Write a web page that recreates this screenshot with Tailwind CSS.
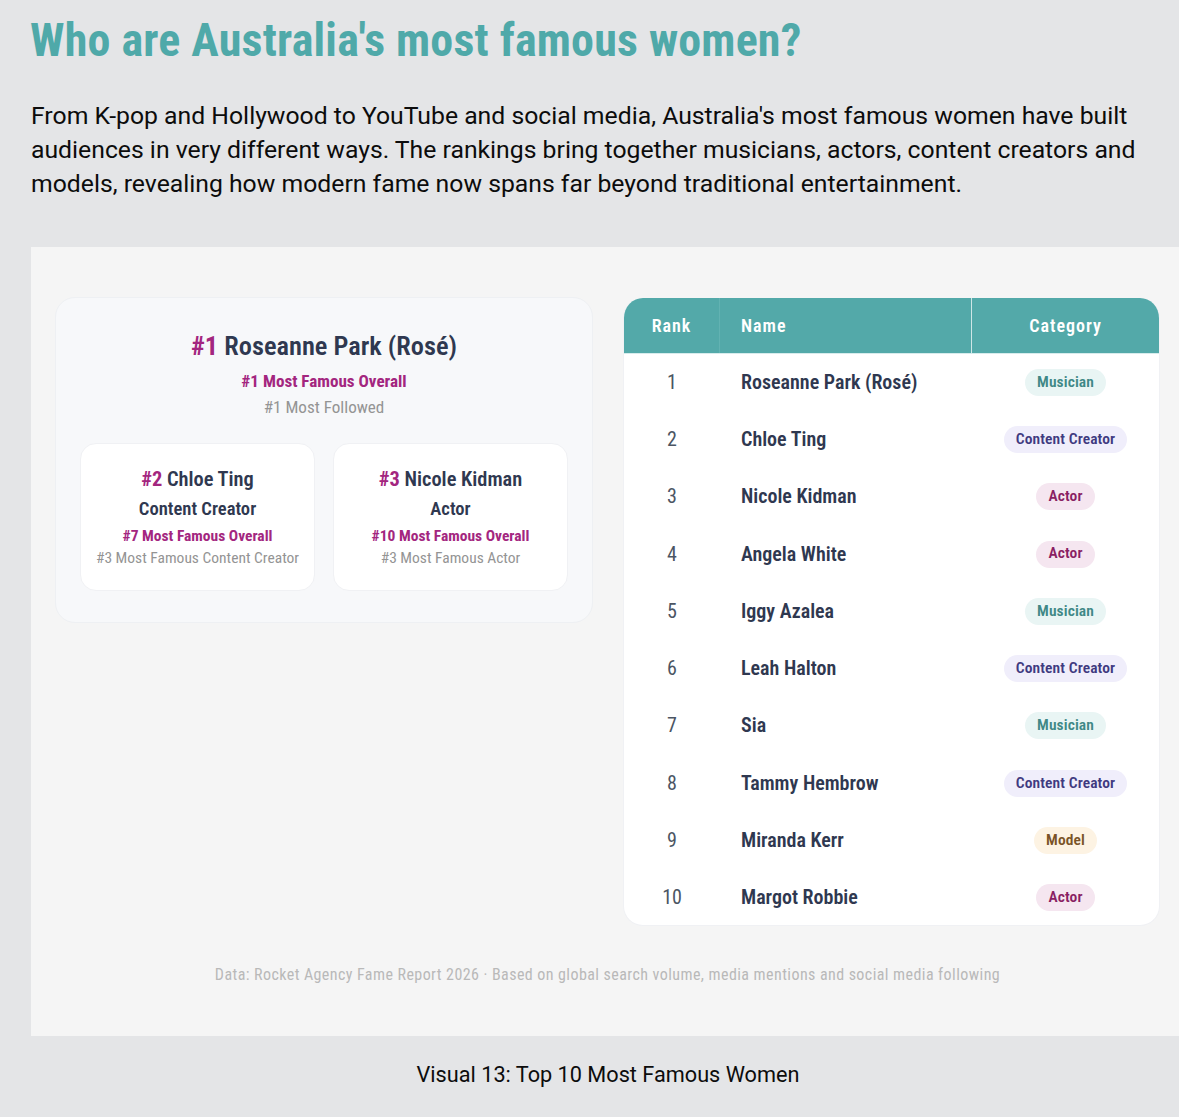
<!DOCTYPE html>
<html lang="en">
<head>
  <meta charset="UTF-8" />
  <title>Top 10 Most Famous Women</title>
  <script src="https://cdn.jsdelivr.net/npm/@tailwindcss/browser@4"></script>
</head>
<body class="bg-[#e4e5e7] font-[Roboto,sans-serif] h-[1117px] overflow-hidden">
  <div class="pl-[31px]">
    <h1 class="font-['Roboto_Condensed',Roboto,sans-serif] font-bold stretch-condensed text-[46px] leading-[54px] pt-[13px] -ml-[1px] text-[#4fa9a9] tracking-[0.2px]">Who are Australia's most famous women?</h1>
    <p class="mt-[32px] text-[24.75px] leading-[34px] text-[#0c0c0c] w-[1130px]">From K-pop and Hollywood to YouTube and social media, Australia's most famous women have built audiences in very different ways. The rankings bring together musicians, actors, content creators and models, revealing how modern fame now spans far beyond traditional entertainment.</p>

    <div class="mt-[46px] bg-[#f5f5f5] h-[789px] pt-[50px] pl-[24px] pr-[19px] font-['Roboto_Condensed',Roboto,sans-serif] stretch-condensed">
      <div class="flex items-start gap-[30px]">
        <!-- podium -->
        <div class="w-[538px] h-[326px] bg-[#f7f8fa] border border-[#eef0f3] rounded-[20px] px-[24px] pt-[29px] text-center">
          <div class="text-[26.4px] leading-[38px] font-semibold text-[#2f3850]"><span class="text-[#a3267f] font-bold">#1</span> Roseanne Park (Rosé)</div>
          <div class="mt-[5px] text-[17.1px] leading-[22px] font-bold text-[#a3267f]">#1 Most Famous Overall</div>
          <div class="mt-[4px] text-[17.1px] leading-[22px] text-[#949494]">#1 Most Followed</div>
          <div class="mt-[25px] flex gap-[18px]">
            <div class="w-[235px] h-[148px] bg-white border border-[#f0f1f4] rounded-[16px] pt-[21px]">
              <div class="text-[20.4px] leading-[28px] font-semibold text-[#2f3850]"><span class="text-[#a3267f] font-bold">#2</span> Chloe Ting</div>
              <div class="mt-[3px] text-[18.6px] leading-[26px] font-semibold text-[#2f3850]">Content Creator</div>
              <div class="mt-[4px] text-[15.5px] leading-[20px] font-bold text-[#a3267f]">#7 Most Famous Overall</div>
              <div class="mt-[2px] text-[15.5px] leading-[20px] text-[#949494]">#3 Most Famous Content Creator</div>
            </div>
            <div class="w-[235px] h-[148px] bg-white border border-[#f0f1f4] rounded-[16px] pt-[21px]">
              <div class="text-[20.4px] leading-[28px] font-semibold text-[#2f3850]"><span class="text-[#a3267f] font-bold">#3</span> Nicole Kidman</div>
              <div class="mt-[3px] text-[18.6px] leading-[26px] font-semibold text-[#2f3850]">Actor</div>
              <div class="mt-[4px] text-[15.5px] leading-[20px] font-bold text-[#a3267f]">#10 Most Famous Overall</div>
              <div class="mt-[2px] text-[15.5px] leading-[20px] text-[#949494]">#3 Most Famous Actor</div>
            </div>
          </div>
        </div>

        <!-- table -->
        <div class="mt-[1px] w-[538px] h-[628px] bg-white rounded-[20px] overflow-hidden border border-[#f0f1f4] border-t-0">
          <div class="flex h-[56px] bg-[#53a9a9] text-white font-semibold text-[18px] tracking-[1px] items-center border-b border-[#d7ecec]">
            <div class="w-[96px] h-full flex items-center justify-center border-r border-[#62b2b2]">Rank</div>
            <div class="w-[252px] h-full flex items-center pl-[21px] border-r border-[#cfe6e6]">Name</div>
            <div class="flex-1 text-center">Category</div>
          </div>
          <div class="-mt-[1px]">
            <div class="flex h-[57.3px] items-center"><div class="w-[96px] text-center text-[20px] text-[#4b5563]">1</div><div class="w-[252px] pl-[21px] text-[20px] font-semibold text-[#2f3850]">Roseanne Park (Rosé)</div><div class="flex-1 flex justify-center"><span class="mt-[1px] rounded-full px-[12px] h-[27px] flex items-center text-[15.5px] tracking-[0.1px] font-semibold bg-[#e9f5f4] text-[#3f8886]">Musician</span></div></div>
            <div class="flex h-[57.3px] items-center"><div class="w-[96px] text-center text-[20px] text-[#4b5563]">2</div><div class="w-[252px] pl-[21px] text-[20px] font-semibold text-[#2f3850]">Chloe Ting</div><div class="flex-1 flex justify-center"><span class="mt-[1px] rounded-full px-[12px] h-[27px] flex items-center text-[15.5px] tracking-[0.1px] font-semibold bg-[#f0eefb] text-[#3f3a80]">Content Creator</span></div></div>
            <div class="flex h-[57.3px] items-center"><div class="w-[96px] text-center text-[20px] text-[#4b5563]">3</div><div class="w-[252px] pl-[21px] text-[20px] font-semibold text-[#2f3850]">Nicole Kidman</div><div class="flex-1 flex justify-center"><span class="mt-[1px] rounded-full px-[12px] h-[27px] flex items-center text-[15.5px] tracking-[0.1px] font-semibold bg-[#f5e6f0] text-[#8a1f63]">Actor</span></div></div>
            <div class="flex h-[57.3px] items-center"><div class="w-[96px] text-center text-[20px] text-[#4b5563]">4</div><div class="w-[252px] pl-[21px] text-[20px] font-semibold text-[#2f3850]">Angela White</div><div class="flex-1 flex justify-center"><span class="mt-[1px] rounded-full px-[12px] h-[27px] flex items-center text-[15.5px] tracking-[0.1px] font-semibold bg-[#f5e6f0] text-[#8a1f63]">Actor</span></div></div>
            <div class="flex h-[57.3px] items-center"><div class="w-[96px] text-center text-[20px] text-[#4b5563]">5</div><div class="w-[252px] pl-[21px] text-[20px] font-semibold text-[#2f3850]">Iggy Azalea</div><div class="flex-1 flex justify-center"><span class="mt-[1px] rounded-full px-[12px] h-[27px] flex items-center text-[15.5px] tracking-[0.1px] font-semibold bg-[#e9f5f4] text-[#3f8886]">Musician</span></div></div>
            <div class="flex h-[57.3px] items-center"><div class="w-[96px] text-center text-[20px] text-[#4b5563]">6</div><div class="w-[252px] pl-[21px] text-[20px] font-semibold text-[#2f3850]">Leah Halton</div><div class="flex-1 flex justify-center"><span class="mt-[1px] rounded-full px-[12px] h-[27px] flex items-center text-[15.5px] tracking-[0.1px] font-semibold bg-[#f0eefb] text-[#3f3a80]">Content Creator</span></div></div>
            <div class="flex h-[57.3px] items-center"><div class="w-[96px] text-center text-[20px] text-[#4b5563]">7</div><div class="w-[252px] pl-[21px] text-[20px] font-semibold text-[#2f3850]">Sia</div><div class="flex-1 flex justify-center"><span class="mt-[1px] rounded-full px-[12px] h-[27px] flex items-center text-[15.5px] tracking-[0.1px] font-semibold bg-[#e9f5f4] text-[#3f8886]">Musician</span></div></div>
            <div class="flex h-[57.3px] items-center"><div class="w-[96px] text-center text-[20px] text-[#4b5563]">8</div><div class="w-[252px] pl-[21px] text-[20px] font-semibold text-[#2f3850]">Tammy Hembrow</div><div class="flex-1 flex justify-center"><span class="mt-[1px] rounded-full px-[12px] h-[27px] flex items-center text-[15.5px] tracking-[0.1px] font-semibold bg-[#f0eefb] text-[#3f3a80]">Content Creator</span></div></div>
            <div class="flex h-[57.3px] items-center"><div class="w-[96px] text-center text-[20px] text-[#4b5563]">9</div><div class="w-[252px] pl-[21px] text-[20px] font-semibold text-[#2f3850]">Miranda Kerr</div><div class="flex-1 flex justify-center"><span class="mt-[1px] rounded-full px-[12px] h-[27px] flex items-center text-[15.5px] tracking-[0.1px] font-semibold bg-[#fdf3e3] text-[#7a5326]">Model</span></div></div>
            <div class="flex h-[57.3px] items-center"><div class="w-[96px] text-center text-[20px] text-[#4b5563]">10</div><div class="w-[252px] pl-[21px] text-[20px] font-semibold text-[#2f3850]">Margot Robbie</div><div class="flex-1 flex justify-center"><span class="mt-[1px] rounded-full px-[12px] h-[27px] flex items-center text-[15.5px] tracking-[0.1px] font-semibold bg-[#f5e6f0] text-[#8a1f63]">Actor</span></div></div>
          </div>
        </div>
      </div>
      <div class="mt-[37px] text-center text-[16px] leading-[24px] text-[#b9b9b9] tracking-[0.43px] w-[1105px]">Data: Rocket Agency Fame Report 2026 · Based on global search volume, media mentions and social media following</div>
    </div>
  </div>
  <div class="mt-[23px] text-center text-[21.7px] leading-[32px] text-[#0c0c0c] w-[1216px]">Visual 13: Top 10 Most Famous Women</div>
</body>
</html>
